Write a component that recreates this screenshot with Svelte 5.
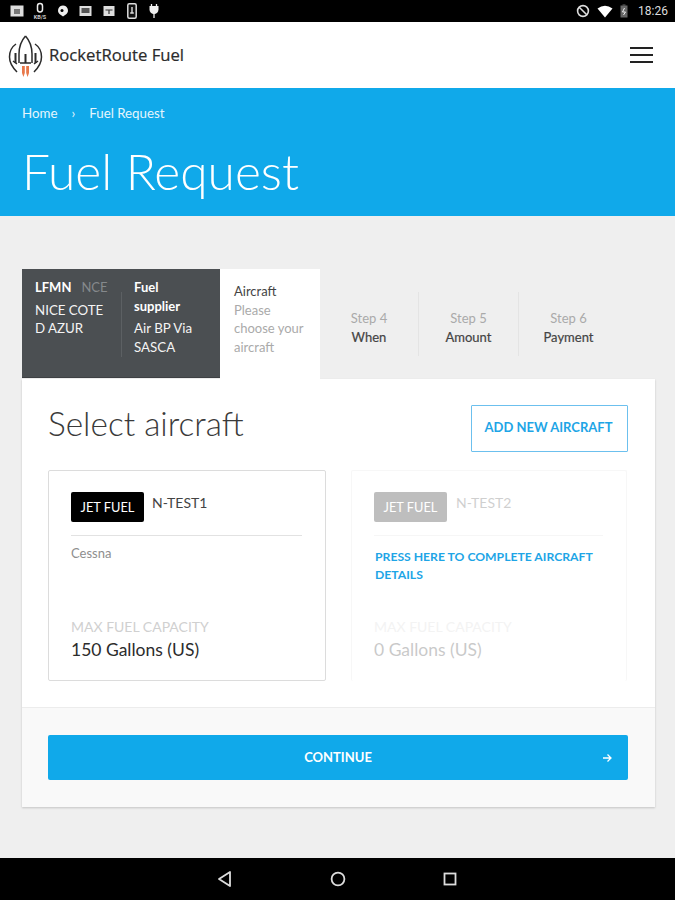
<script>
  const steps = [
    { n: 'Step 4', t: 'When' },
    { n: 'Step 5', t: 'Amount' },
    { n: 'Step 6', t: 'Payment' }
  ];
</script>

<div class="screen">
  <div class="status">
    <div class="icons-left">
      <svg width="14" height="14" viewBox="0 0 14 14"><rect x="0.500" y="1.500" width="13" height="11" fill="#ddd"/><rect x="4" y="5" width="6" height="5" fill="#777"/></svg>
      <svg class="sp" width="16" height="18" viewBox="0 0 16 18"><rect x="5.500" y="1.500" width="5" height="8.500" rx="2.400" fill="none" stroke="#eee" stroke-width="1.500"/><text x="8" y="16.500" text-anchor="middle" font-size="5.500" font-weight="700" fill="#ccc" font-family="Roboto, sans-serif">KB/S</text></svg>
      <svg class="sp2" width="12" height="14" viewBox="0 0 12 14"><path d="M6 1.500a5 5 0 0 1 3.500 8.500L6 12.500 2.500 10A5 5 0 0 1 6 1.500z" fill="#eee"/><circle cx="5" cy="6.400" r="1.500" fill="#000"/></svg>
      <svg class="sp3" width="13" height="14" viewBox="0 0 13 14"><rect x="0.500" y="2" width="12" height="10" fill="#ddd"/><rect x="2.500" y="4" width="8" height="5" fill="#555"/></svg>
      <svg class="sp4" width="12" height="14" viewBox="0 0 12 14"><rect x="0.500" y="2" width="11" height="10" fill="#ddd"/><path d="M2.500 6h7M6 6v4" stroke="#333" stroke-width="1.200"/></svg>
      <svg class="sp5" width="10" height="16" viewBox="0 0 10 16"><rect x="0.800" y="0.800" width="8.400" height="14.400" rx="1.500" fill="#111" stroke="#ddd" stroke-width="1.500"/><path d="M5 4v6M3.200 10h3.600" stroke="#ddd" stroke-width="1.400"/></svg>
      <svg class="sp6" width="10" height="16" viewBox="0 0 10 16"><path d="M0.500 3h9v3.500a4.500 4.500 0 0 1-9 0z" fill="#eee"/><path d="M2.500 1v3M7.500 1v3M5 10v5" stroke="#eee" stroke-width="1.300"/></svg>
    </div>
    <div class="icons-right">
      <svg width="14" height="14" viewBox="0 0 14 14"><circle cx="7" cy="7" r="5.400" fill="none" stroke="#ddd" stroke-width="1.600"/><path d="M3.200 3.200l7.600 7.600" stroke="#ddd" stroke-width="1.600"/></svg>
      <svg width="16" height="13" viewBox="0 0 16 13"><path d="M0.500 3.500Q8-2 15.500 3.500L8 12.500z" fill="#fff"/></svg>
      <svg width="8" height="14" viewBox="0 0 8 14"><rect x="0.500" y="1.500" width="7" height="12" fill="#666"/><rect x="2.500" y="0.500" width="3" height="1" fill="#666"/><path d="M4.500 4L2.500 8h3l-2 3" stroke="#eee" fill="none"/></svg>
      <span class="clock">18:26</span>
    </div>
  </div>

  <header class="topbar">
    <div class="brand">
      <svg class="logo" width="36" height="44" viewBox="0 0 36 44" fill="none" stroke="#2b2b2b" stroke-width="1.500">
        <path d="M17.500 2C13 7 11 13 11 20V29M17.500 2C22 7 24 13 24 20V29"/>
        <path d="M8 10C3.500 13 1.500 18 1.500 23S4 33 9 38M27 10C31.500 13 33.500 18 33.500 23S31 33 26 38"/>
        <path d="M7.500 19v10M27.500 19v10M17.500 20v9" stroke-width="2"/>
        <path d="M5 27l4 3M30 27l-4 3M12 29h11"/>
        <path d="M14 32h2.800v7l-1.400 4-1.400-4zM18.200 32H21v7l-1.400 4-1.400-4z" fill="#e8784a" stroke="none"/>
      </svg>
      <span class="brand-name">RocketRoute Fuel</span>
    </div>
    <button class="burger" aria-label="Menu"><i></i><i></i><i></i></button>
  </header>

  <section class="hero">
    <nav class="crumbs"><span>Home</span><span class="sep">›</span><span>Fuel Request</span></nav>
    <h1>Fuel Request</h1>
  </section>

  <main class="page">
    <div class="tabs">
      <div class="done">
        <div class="col first">
          <div class="code"><b>LFMN</b><span>NCE</span></div>
          <div class="val">NICE COTE D AZUR</div>
        </div>
        <div class="col second">
          <div class="supplier">Fuel supplier</div>
          <div class="val">Air BP Via SASCA</div>
        </div>
      </div>
      <div class="current">
        <div class="cur-title">Aircraft</div>
        <div class="cur-sub">Please choose your aircraft</div>
      </div>
      <div class="pending">
        {#each steps as s}
          <div class="step"><span>{s.n}</span><b>{s.t}</b></div>
        {/each}
      </div>
    </div>

    <div class="panel">
      <div class="panel-body">
        <div class="panel-head">
          <h2>Select aircraft</h2>
          <button class="add">ADD NEW AIRCRAFT</button>
        </div>
        <div class="grid">
          <article class="plane">
            <div class="plane-top"><span class="tag">JET FUEL</span><span class="reg">N-TEST1</span></div>
            <div class="plane-mid"><span class="make">Cessna</span></div>
            <div class="cap-label">MAX FUEL CAPACITY</div>
            <div class="cap">150 Gallons (US)</div>
          </article>
          <article class="plane off">
            <div class="faded plane-top"><span class="tag">JET FUEL</span><span class="reg">N-TEST2</span></div>
            <div class="plane-mid link-wrap"><span class="link">PRESS HERE TO COMPLETE AIRCRAFT DETAILS</span></div>
            <div class="faded cap-label">MAX FUEL CAPACITY</div>
            <div class="faded cap">0 Gallons (US)</div>
          </article>
        </div>
      </div>
      <div class="panel-foot">
        <button class="continue">
          <span>CONTINUE</span>
          <svg width="10" height="10" viewBox="0 0 10 10" fill="none" stroke="#fff" stroke-width="1.300"><path d="M1 5h8M5.500 1.500L9 5 5.500 8.500"/></svg>
        </button>
      </div>
    </div>
  </main>

  <footer class="navbar">
    <svg width="16" height="18" viewBox="0 0 16 18" fill="none" stroke="#ddd" stroke-width="1.800"><path d="M13 2v14L2 9z" stroke-linejoin="round"/></svg>
    <svg width="16" height="16" viewBox="0 0 16 16" fill="none" stroke="#ddd" stroke-width="1.800"><circle cx="8" cy="8" r="6.400"/></svg>
    <svg width="14" height="14" viewBox="0 0 14 14" fill="none" stroke="#ddd" stroke-width="1.800"><rect x="1.500" y="1.500" width="11" height="11"/></svg>
  </footer>
</div>

<style>
  :global(body) { margin: 0; }
  .screen {
    width: 675px; height: 900px; display: flex; flex-direction: column;
    font-family: Lato, "Open Sans", sans-serif; background: #efefef; overflow: hidden;
  }
  .status {
    height: 22px; background: #000; display: flex; justify-content: space-between;
    align-items: center; padding: 0 7px 0 10px; flex: none;
  }
  .icons-left { display: flex; align-items: center; }
  .sp { margin-left: 8px; }
  .sp2 { margin-left: 9px; }
  .sp3 { margin-left: 10px; }
  .sp4 { margin-left: 11px; }
  .sp5 { margin-left: 12px; }
  .sp6 { margin-left: 12px; }
  .icons-right { display: flex; align-items: center; gap: 7px; }
  .clock { color: #ddd; font-size: 12px; font-family: Roboto, sans-serif; margin-left: 3px; }

  .topbar {
    height: 66px; background: #fff; display: flex; justify-content: space-between;
    align-items: center; padding: 0 22px 0 8px; flex: none; box-sizing: border-box;
  }
  .brand { display: flex; align-items: center; gap: 5px; }
  .logo { margin-top: 2px; }
  .brand-name { font-family: "Open Sans", sans-serif; font-size: 16.700px; color: #2b2b2b; margin-top: -2px; -webkit-text-stroke: 0.200px #2b2b2b; }
  .burger { width: 23px; padding: 0; border: 0; background: none; display: flex; flex-direction: column; gap: 4.500px; }
  .burger i { display: block; height: 2.500px; background: #222; }

  .hero { height: 128px; background: #10a9ea; color: #fff; padding: 16px 0 0 22px; box-sizing: border-box; flex: none; }
  .crumbs { font-size: 13.300px; line-height: 18px; display: flex; gap: 14px; color: #e4f5fd; }
  h1 { margin: 21px 0 0 0; font-size: 49.700px; line-height: 56px; font-weight: 300; }

  .page { flex: 1; padding: 53px 20px 0 22px; }
  .tabs { display: flex; align-items: stretch; height: 110px; }
  .done { width: 198px; height: 109px; background: #4b4f52; color: #fff; display: flex; padding-top: 9px; box-sizing: border-box; border-bottom: 1px solid #3d4043; }
  .col { box-sizing: border-box; font-size: 13.300px; line-height: 18.500px; }
  .first { width: 99px; padding-left: 13px; padding-right: 6px; }
  .second { width: 99px; padding-left: 13px; padding-right: 25px; position: relative; }
  .second::before { content: ""; position: absolute; left: 0; top: 14px; height: 65px; width: 1px; background: #5c6063; }
  .code { font-size: 13px; }
  .code b { font-weight: 700; }
  .code span { color: #85898c; margin-left: 10px; }
  .val { margin-top: 4px; color: #f4f4f4; }
  .supplier { font-weight: 700; font-size: 13px; }
  .current { width: 100px; background: #fff; padding: 13px 8px 0 14px; box-sizing: border-box; font-size: 13px; line-height: 18.500px; }
  .cur-title { color: #444; }
  .cur-sub { color: #aaa; }
  .pending { display: flex; height: 64px; margin-top: 23px; }
  .step { width: 100px; display: flex; flex-direction: column; align-items: center; justify-content: center; padding-top: 8px; box-sizing: border-box; font-size: 13px; line-height: 19px; border-left: 1px solid #e4e4e4; }
  .step:first-child { width: 98px; border-left: 0; }
  .step span { color: #aaa; }
  .step b { font-weight: 400; color: #444; -webkit-text-stroke: 0.200px #444; }

  .panel { background: #fff; box-shadow: 0 1px 2px rgba(0,0,0,.18); }
  .panel-body { padding: 26px 27px 0 26px; height: 329px; box-sizing: border-box; border-bottom: 1px solid #ececec; }
  .panel-head { display: flex; justify-content: space-between; align-items: flex-start; height: 47px; }
  h2 { margin: 0; font-size: 33.400px; line-height: 36px; font-weight: 300; color: #3a3a3a; }
  .add { width: 157px; height: 47px; background: #fff; border: 1px solid #6cc0ee; border-radius: 1px; color: #1ea5e6; font: 700 13px Lato, sans-serif; padding: 0 2px 3px 0; }
  .grid { display: grid; grid-template-columns: 278px 276px; justify-content: space-between; margin: 18px 1px 0 0; height: 211px; }
  .plane { border: 1px solid #dcdcdc; border-radius: 2px; padding: 21px 23px 0 22px; box-sizing: border-box; height: 211px; display: flex; flex-direction: column; }
  .plane.off { border-color: #f7f7f7; border-bottom: 0; }
  .faded { opacity: .25; }
  .plane-top { display: flex; align-items: flex-start; gap: 9px; height: 43px; border-bottom: 1px solid #e2e2e2; flex: none; }
  .off .plane-top { border-color: #ddd; }
  .tag { width: 73px; height: 30px; line-height: 30px; text-align: center; background: #000; color: #fff; border-radius: 2px; font-size: 12.800px; }
  .reg { font-size: 14px; color: #444; line-height: 20px; margin-top: 1px; margin-left: -1px; }
  .off .reg { margin-left: 0; }
  .plane-mid { height: 81px; padding-top: 8px; box-sizing: border-box; font-size: 13px; line-height: 18px; }
  .link-wrap { padding: 12px 0 0 1px; }
  .make { color: #8e8e8e; }
  .link { display: block; color: #1ea5e6; font-weight: 700; font-size: 12.200px; line-height: 18px; }
  .cap-label { font-size: 14px; color: #d0d0d0; line-height: 18px; margin-top: 1px; }
  .cap { font-size: 17.500px; color: #2c2c2c; line-height: 24px; margin-top: 2px; }

  .panel-foot { height: 99px; background: #f9f9f9; padding: 27px 27px 0 26px; box-sizing: border-box; }
  .continue { width: 100%; height: 45px; background: #10a9ea; border: 0; border-radius: 2px; color: #fff; font: 700 13px Lato, sans-serif; position: relative; padding: 0 0 1px; }
  .continue svg { position: absolute; right: 16px; top: 18px; }

  .navbar { height: 42px; background: #000; display: flex; align-items: center; justify-content: center; gap: 97px; padding-right: 1px; flex: none; }
</style>
